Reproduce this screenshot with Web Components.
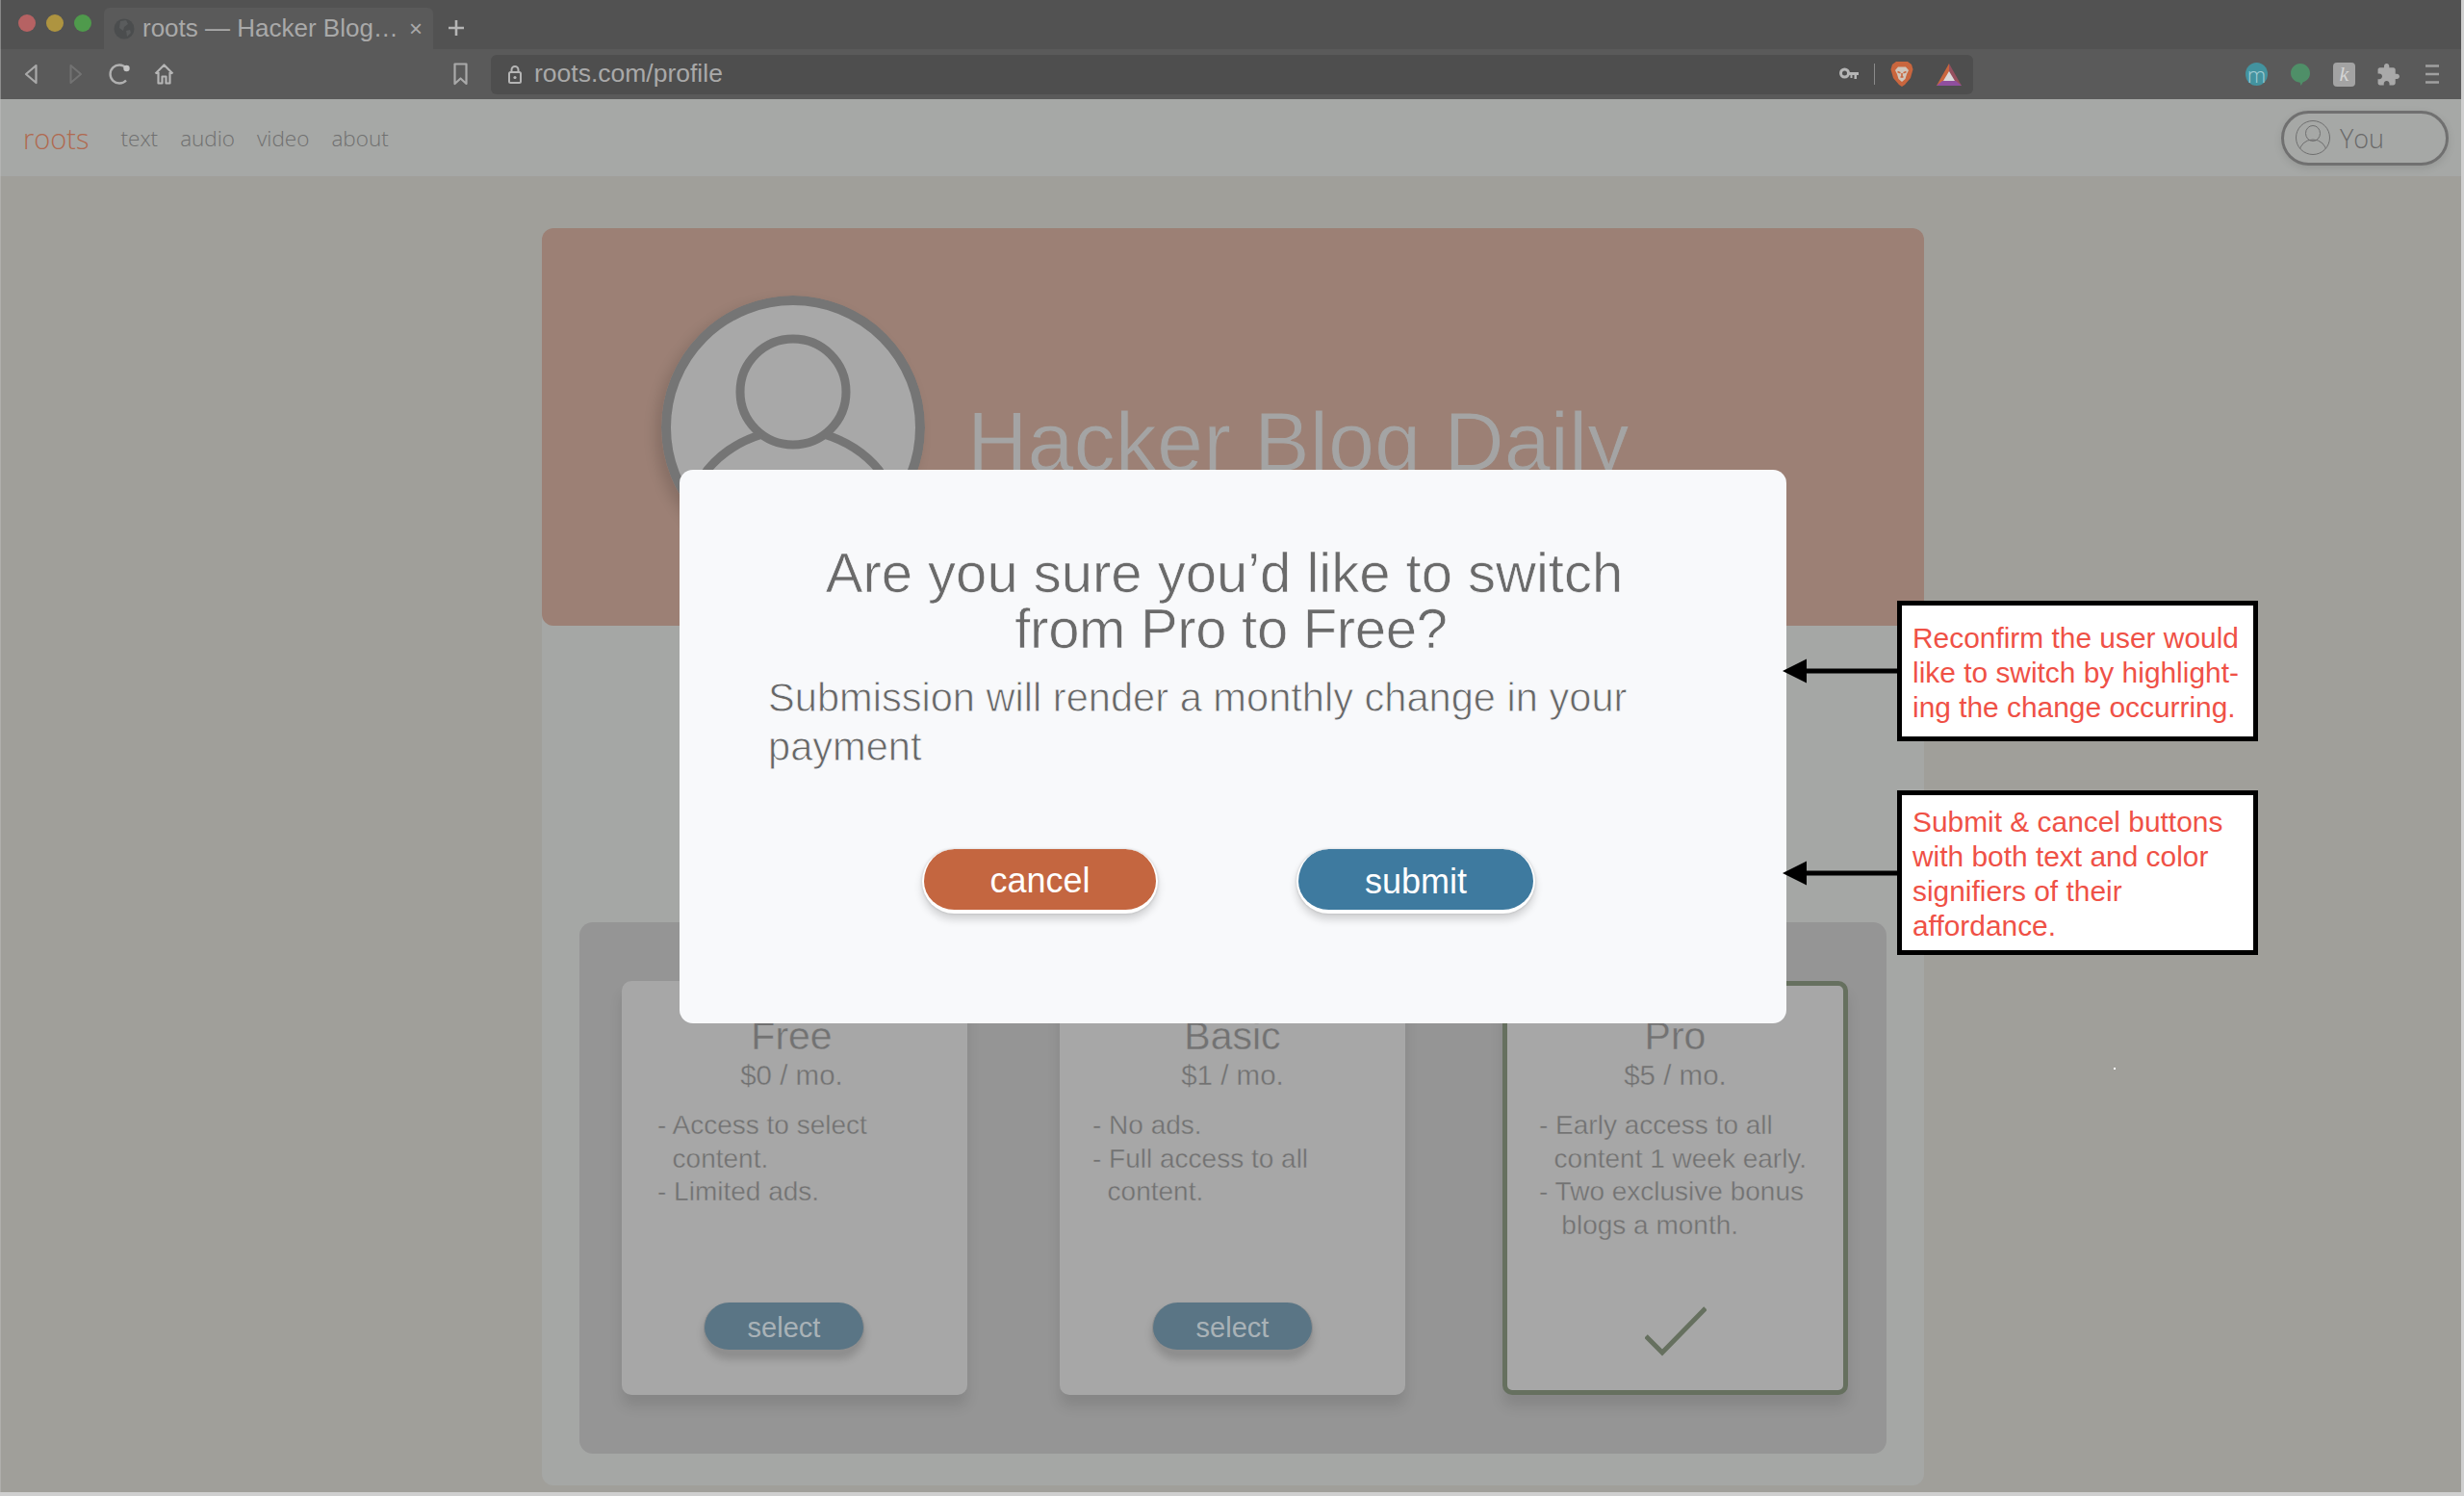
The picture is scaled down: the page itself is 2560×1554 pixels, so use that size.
<!DOCTYPE html>
<html lang="en">
<head>
<meta charset="utf-8">
<title>roots — Hacker Blog Daily</title>
<style>
  html, body { margin: 0; padding: 0; background: #cfcfcf; }
  body { width: 2560px; height: 1554px; overflow: hidden; position: relative; font-family: "Liberation Sans", Arial, sans-serif; }
</style>
</head>
<body>
<div id="app" style="width:2557px; height:1550px; background:#a09f9a; position:relative; overflow:hidden;">
  <browser-chrome tab-title="roots — Hacker Blog…" url="roots.com/profile"></browser-chrome>
  <site-nav></site-nav>
  <profile-page title-text="Hacker Blog Daily">
    <price-card name="Free" price="$0 / mo." pad="37" style="--shift:-11px; --nudge:6px" features="- Access to select
  content.
- Limited ads."><pill-button slot="footer" kind="select">select</pill-button></price-card>
    <price-card name="Basic" price="$1 / mo." pad="34" features="- No ads.
- Full access to all
  content."><pill-button slot="footer" kind="select">select</pill-button></price-card>
    <price-card name="Pro" price="$5 / mo." pad="33" selected features="- Early access to all
  content 1 week early.
- Two exclusive bonus
   blogs a month."><svg slot="footer" width="64" height="52" viewBox="0 0 64 52"><path d="M1 31 L18 48 L63 2" fill="none" stroke="#66705f" stroke-width="5"/></svg></price-card>
  </profile-page>
  <confirm-modal>
    <span slot="title">Are you sure you’d like to switch<br><span style="padding-left:14px; letter-spacing:-.3px">from Pro to Free?</span></span>
    <span slot="body">Submission will render a monthly change in your payment</span>
    <pill-button slot="actions" kind="cancel">cancel</pill-button>
    <pill-button slot="actions" kind="submit">submit</pill-button>
  </confirm-modal>
  <note-callout style="left:1852px; top:624px" box-height="146" pad-top="16">Reconfirm the user would<br>like to switch by highlight-<br>ing the change occurring.</note-callout>
  <note-callout style="left:1852px; top:821px" box-height="171" pad-top="10">Submit &amp; cancel buttons<br>with both text and color<br>signifiers of their<br>affordance.</note-callout>
  <i style="position:absolute; left:2196px; top:1109px; width:2px; height:2px; background:#fff"></i>
  <i style="position:absolute; left:0; top:0; width:1px; height:100%; background:#bdbdbd; opacity:.5"></i>
</div>

<script>
class BrowserChrome extends HTMLElement {
  constructor() {
    super();
    this.attachShadow({ mode: "open" });
  }
  connectedCallback() {
    const title = this.getAttribute("tab-title") || "";
    const url = this.getAttribute("url") || "";
    this.shadowRoot.innerHTML = `
      <style>
        :host { display: block; font-family: "Liberation Sans", Arial, sans-serif; color: #a9a9a9; }
        .tabs { height: 51px; background: #525252; display: flex; align-items: flex-end; box-sizing: border-box; }
        .lights { display: flex; gap: 11px; margin-left: 19px; align-self: flex-start; margin-top: 15px; }
        .lights i { width: 18px; height: 18px; border-radius: 50%; display: block; }
        .tab { margin-left: 13px; width: 342px; height: 43px; box-sizing: border-box; background: #5a5a5a; border-radius: 6px 6px 0 0; display: flex; align-items: center; padding-left: 10px; font-size: 26px; }
        .tab .title { margin-left: 8px; white-space: nowrap; flex: 1; }
        .tab .x { font-size: 24px; margin-right: 11px; }
        .plus { align-self: center; margin-left: 15px; display: block; margin-top: 6px; }
        .bar { height: 52px; background: #5a5a5a; display: flex; align-items: center; }
        .bar svg { display: block; flex: none; }
        .url { width: 1540px; height: 41px; background: #4e4e4e; border-radius: 6px; display: flex; align-items: center; margin-left: 24px; flex: none; }
        .url .addr { margin-left: 13px; font-size: 26.5px; white-space: nowrap; flex: 1; margin-top: -2px; }
        .url .sep { width: 1px; height: 22px; background: #8a8a8a; margin: 0 16px 0 16px; }
        .ext { width: 23px; height: 23px; flex: none; display: flex; align-items: center; justify-content: center; }
        .m { background: #43939f; border-radius: 50%; color: #a3cdd4; font-size: 22px; font-family: "Open Sans", sans-serif; font-weight: 300; width: 23px; height: 24px; line-height: 20px; }
        .k { background: #a3a3a3; border-radius: 4px; color: #d4d4d4; font: italic 22px "Liberation Serif", serif; height: 25px; }
      </style>
      <div class="tabs">
        <div class="lights"><i style="background:#b66263"></i><i style="background:#ae9440"></i><i style="background:#4f9a4c"></i></div>
        <div class="tab">
          <svg width="22" height="22" viewBox="0 0 22 22"><circle cx="11" cy="11" r="10.5" fill="#4b4d4e"/><path d="M7 3l6-1 2 4-4 3-1 4-4-3zM13 13l4-1 1 3-4 4z" fill="#5a5c5d"/></svg>
          <span class="title">${title}</span><span class="x">×</span>
        </div>
        <svg class="plus" width="18" height="18" viewBox="0 0 18 18"><path d="M9 1v16M1 9h16" stroke="#b5b5b5" stroke-width="2.6"/></svg>
      </div>
      <div class="bar">
        <svg style="margin-left:25px" width="14" height="22" viewBox="0 0 14 22"><path d="M12.5 2 L2 11 L12.5 20 Z" fill="none" stroke="#a9a9a9" stroke-width="2.2" stroke-linejoin="round"/></svg>
        <svg style="margin-left:33px" width="14" height="22" viewBox="0 0 14 22"><path d="M1.5 2 L12 11 L1.5 20 Z" fill="none" stroke="#727272" stroke-width="2"  stroke-linejoin="round"/></svg>
        <svg style="margin-left:27px" width="23" height="24" viewBox="0 0 23 24"><path d="M18 18.5A9.5 9.5 0 1 1 18 5.5" fill="none" stroke="#b0b0b0" stroke-width="2.4"/><circle cx="18.5" cy="6" r="3.2" fill="#c4c4c4"/></svg>
        <svg style="margin-left:24px" width="21" height="24" viewBox="0 0 21 24"><path d="M1.5 11.5 L10.5 2.5 L19.5 11.5 M4.5 10 V21.5 H8.5 V14.5 H12.5 V21.5 H16.5 V10" fill="none" stroke="#b5b5b5" stroke-width="2.2" stroke-linejoin="round"/></svg>
        <svg style="margin-left:290px" width="15" height="24" viewBox="0 0 15 24"><path d="M1.5 1.5 H13.5 V22 L7.5 16.5 L1.5 22 Z" fill="none" stroke="#a9a9a9" stroke-width="2.2" stroke-linejoin="round"/></svg>
        <div class="url">
          <svg style="margin-left:18px" width="14" height="20" viewBox="0 0 14 20"><path d="M3.5 8V5.5a3.5 3.5 0 0 1 7 0V8" fill="none" stroke="#b5b5b5" stroke-width="2"/><rect x="1" y="8" width="12" height="11" rx="1.5" fill="none" stroke="#b5b5b5" stroke-width="2"/><circle cx="7" cy="13.5" r="1.6" fill="#b5b5b5"/></svg>
          <span class="addr">${url}</span>
          <svg width="20" height="14" viewBox="0 0 20 14"><circle cx="5.5" cy="6" r="4" fill="none" stroke="#b5b5b5" stroke-width="3"/><path d="M9 5H20V8H18V12H15.5V8H13.5V11H11.5V8H9Z" fill="#b5b5b5"/></svg>
          <span class="sep"></span>
          <svg width="24" height="28" viewBox="0 0 24 28"><path d="M6 1H18L22 4 23.5 9 21 18 15 25 12 27 9 25 3 18 .5 9 2 4Z" fill="#c9663e"/><path d="M8 6.5H16L19 10 17 14 15.5 19 12 22 8.5 19 7 14 5 10Z" fill="#cfc6bc"/><path d="M7.5 11.5l3 1.2M16.5 11.5l-3 1.2M10.5 17h3M12 13v4" stroke="#c9663e" stroke-width="1.6" fill="none"/></svg>
          <svg style="margin-left:24px;margin-right:12px" width="26" height="23" viewBox="0 0 26 23"><path d="M13 0 L26 23 H18 L13 14Z" fill="#95505f"/><path d="M13 0 L0 23 H8 L13 14Z" fill="#c9663e"/><path d="M0 23 H26 L20 18 H6Z" fill="#8f4f9e"/><path d="M13 8 L19 18 H7Z" fill="#d9d9d9"/></svg>
        </div>
        <div class="ext m" style="margin-left:283px">m</div>
        <svg style="margin-left:24px" width="20" height="23" viewBox="0 0 20 23"><path d="M10 0C15.5 0 20 4.5 20 10 20 14.8 17 18 12.6 19.4L10.6 23 9.6 19.8C4 19 0 15 0 10 0 4.5 4.5 0 10 0Z" fill="#4f8f68"/></svg>
        <div class="ext k" style="margin-left:24px">k</div>
        <svg style="margin-left:23px" width="23" height="23" viewBox="1.5 1 21.5 21.5"><path d="M20.5 11H19V7c0-1.1-.9-2-2-2h-4V3.5C13 2.12 11.88 1 10.5 1S8 2.12 8 3.5V5H4c-1.1 0-1.99.9-1.99 2v3.8H3.5c1.49 0 2.7 1.21 2.7 2.7s-1.21 2.7-2.7 2.7H2V20c0 1.1.9 2 2 2h3.8v-1.5c0-1.49 1.21-2.7 2.7-2.7 1.49 0 2.7 1.21 2.7 2.7V22H17c1.1 0 2-.9 2-2v-4h1.5c1.38 0 2.5-1.12 2.5-2.5S21.88 11 20.5 11z" fill="#a9a9a9"/></svg>
        <svg style="margin-left:27px" width="14" height="20" viewBox="0 0 14 20"><path d="M0 1.5H14M0 10H14M0 18.5H14" stroke="#a0a0a0" stroke-width="2.4"/></svg>
      </div>`;
  }
}
customElements.define("browser-chrome", BrowserChrome);

class SiteNav extends HTMLElement {
  constructor() {
    super();
    this.attachShadow({ mode: "open" });
    this.shadowRoot.innerHTML = `
      <style>
        :host { display: flex; align-items: center; height: 80px; background: #a6a8a6; font-family: "Open Sans", sans-serif; font-weight: 300; color: #707070; box-sizing: border-box; padding-left: 24px; }
        .logo { color: #b06a50; font-size: 29px; margin-right: 33px; }
        a { font-size: 22.5px; margin-right: 23px; }
        .you { margin-left: auto; margin-right: 13px; width: 174px; height: 57px; box-sizing: border-box; border: 3px solid #707070; border-radius: 29px; display: flex; align-items: center; padding-left: 12px; font-size: 27px; color: #6a6a6a; box-shadow: 0 3px 8px rgba(0,0,0,.1); }
        .you svg { margin-right: 10px; }
      </style>
      <span class="logo">roots</span>
      <a>text</a><a>audio</a><a>video</a><a>about</a>
      <div class="you">
        <svg width="36" height="36" viewBox="0 0 36 36"><defs><clipPath id="c"><circle cx="18" cy="18" r="17.5"/></clipPath></defs><circle cx="18" cy="18" r="17.5" fill="none" stroke="#6f6f6f"/><g clip-path="url(#c)" fill="none" stroke="#6f6f6f"><ellipse cx="18" cy="13.5" rx="7.5" ry="8"/><ellipse cx="18" cy="33" rx="14" ry="13"/></g></svg>
        You
      </div>`;
  }
}
customElements.define("site-nav", SiteNav);

class ProfilePage extends HTMLElement {
  constructor() {
    super();
    this.attachShadow({ mode: "open" });
  }
  connectedCallback() {
    this.shadowRoot.innerHTML = `
      <style>
        :host { display: block; padding: 54px 0 0 563px; font-family: "Liberation Sans", Arial, sans-serif; }
        .sheet { width: 1436px; height: 1306px; background: #a5a7a5; border-radius: 12px; box-sizing: border-box; padding-bottom: 33px; display: flex; flex-direction: column; }
        .hero { height: 413px; flex: none; background: #9c8075; border-radius: 12px; display: flex; align-items: flex-start; box-sizing: border-box; padding: 70px 0 0 124px; }
        .avatar { width: 274px; height: 274px; flex: none; display: block; border-radius: 50%; box-shadow: -6px 6px 14px rgba(0,0,0,.14); }
        h1 { margin: 102px 0 0 44px; font-weight: 400; font-size: 86.5px; line-height: 100px; color: #a4a4a4; white-space: nowrap; -webkit-text-stroke: .9px #9c8075; }
        .plans { margin: 308px 39px 0; flex: 1; background: #959595; border-radius: 14px; display: flex; gap: 96px; box-sizing: border-box; padding: 61px 0 61px 44px; }
      </style>
      <div class="sheet">
        <div class="hero">
          <svg class="avatar" viewBox="0 0 274 274">
            <circle cx="137" cy="137" r="132" fill="#a8a8a8" stroke="#757575" stroke-width="10"/>
            <ellipse cx="137" cy="100" rx="55" ry="55" fill="none" stroke="#757575" stroke-width="9"/>
            <path d="M105 144C82 151 62 164 48 181 38 195 30 210 26 225M169 144C192 151 212 164 226 181 236 195 244 210 248 225" fill="none" stroke="#757575" stroke-width="9"/>
          </svg>
          <h1>${this.getAttribute("title-text") || ""}</h1>
        </div>
        <div class="plans"><slot></slot></div>
      </div>`;
  }
}
customElements.define("profile-page", ProfilePage);

class PriceCard extends HTMLElement {
  constructor() {
    super();
    this.attachShadow({ mode: "open" });
  }
  connectedCallback() {
    const selected = this.hasAttribute("selected");
    this.shadowRoot.innerHTML = `
      <style>
        :host { display: block; width: 359px; height: 430px; flex: none; ${selected ? "margin-left:5px;" : ""} }
        .card { height: 100%; box-sizing: border-box; background: #a7a7a7; border-radius: 10px; display: flex; flex-direction: column; color: #727272; box-shadow: 0 12px 14px rgba(0,0,0,.1); -webkit-text-stroke: .4px #a7a7a7;
          padding: ${selected ? 29 : 34}px 0 ${selected ? 35 : 43}px;
          border: ${selected ? "5px solid #66705f" : "0"}; }
        .name { font-size: 41px; line-height: 46px; text-align: center; margin-right: var(--nudge, 0); }
        .price { font-size: 29.5px; line-height: 36px; text-align: center; margin-right: var(--nudge, 0); }
        pre { font: inherit; font-size: 28px; line-height: 34.6px; margin: 17px 0 0; padding-left: ${this.getAttribute("pad") || 37}px; }
        .foot { margin-top: auto; align-self: center; transform: translateX(var(--shift, 0)); -webkit-text-stroke: 0; }
        ::slotted(svg) { display: block; }
      </style>
      <div class="card">
        <div class="name">${this.getAttribute("name")}</div>
        <div class="price">${this.getAttribute("price")}</div>
        <pre>${this.getAttribute("features")}</pre>
        <div class="foot"><slot name="footer"></slot></div>
      </div>`;
  }
}
customElements.define("price-card", PriceCard);

class PillButton extends HTMLElement {
  constructor() {
    super();
    this.attachShadow({ mode: "open" });
  }
  connectedCallback() {
    const kind = this.getAttribute("kind");
    const styles = {
      cancel: "width:245px;height:67px;padding-top:2px;background:#c46640;color:#fff;font-size:36px;border-color:#fff;border-width:0 2px 4px;box-shadow:0 6px 9px rgba(0,0,0,.16),0 0 3px rgba(0,0,0,.16);",
      submit: "width:248px;height:67px;padding-top:4px;background:#3e7a9f;color:#fff;font-size:36px;border-color:#fff;border-width:0 2px 4px;box-shadow:0 6px 9px rgba(0,0,0,.16),0 0 3px rgba(0,0,0,.16);",
      select: "width:167px;height:53px;padding-top:3px;background:#5a7585;color:#a9b2b7;font-size:29px;border-color:#8f8f8f;border-width:0 1px 4px;box-shadow:0 6px 9px rgba(0,0,0,.16);",
    };
    this.shadowRoot.innerHTML = `
      <style>
        :host { display: block; font-family: "Liberation Sans", Arial, sans-serif; }
        button { display: flex; align-items: center; justify-content: center; box-sizing: border-box; padding-left: 0; padding-right: 0; padding-bottom: 0; font-family: inherit; border-style: solid; border-radius: 34px; ${styles[kind] || ""} }
      </style>
      <button><slot></slot></button>`;
  }
}
customElements.define("pill-button", PillButton);

class ConfirmModal extends HTMLElement {
  constructor() {
    super();
    this.attachShadow({ mode: "open" });
    this.shadowRoot.innerHTML = `
      <style>
        :host { position: absolute; left: 706px; top: 488px; width: 1150px; height: 575px; box-sizing: border-box; background: #f8f9fb; border-radius: 14px; padding-top: 78px; font-family: "Liberation Sans", Arial, sans-serif; color: #6a6a6a; }
        .title { font-size: 58px; line-height: 58px; text-align: center; margin-right: 18px; -webkit-text-stroke: .7px #f8f9fb; }
        .body { font-size: 41.6px; line-height: 51px; margin: 17px 0 0 92px; width: 960px; -webkit-text-stroke: .8px #f8f9fb; color: #666; }
        .actions { display: flex; gap: 144px; margin: 81px 0 0 252px; -webkit-text-stroke: 0; }
      </style>
      <div class="title"><slot name="title"></slot></div>
      <div class="body"><slot name="body"></slot></div>
      <div class="actions"><slot name="actions"></slot></div>`;
  }
}
customElements.define("confirm-modal", ConfirmModal);

class NoteCallout extends HTMLElement {
  constructor() {
    super();
    this.attachShadow({ mode: "open" });
  }
  connectedCallback() {
    this.shadowRoot.innerHTML = `
      <style>
        :host { position: absolute; display: flex; align-items: center; font-family: "Liberation Sans", Arial, sans-serif; }
        svg { display: block; flex: none; }
        .box { width: 375px; height: ${this.getAttribute("box-height")}px; box-sizing: border-box; background: #fff; border: 5px solid #000; padding: ${this.getAttribute("pad-top")}px 0 0 11px; color: #ef5146; font-size: 29.9px; line-height: 36px; white-space: nowrap; }
      </style>
      <svg width="119" height="26" viewBox="0 0 119 26"><path d="M0 13 L25 0.5 V10.5 H119 V15.5 H25 V25.5Z" fill="#000"/></svg>
      <div class="box"><slot></slot></div>`;
  }
}
customElements.define("note-callout", NoteCallout);
</script>
</body>
</html>
